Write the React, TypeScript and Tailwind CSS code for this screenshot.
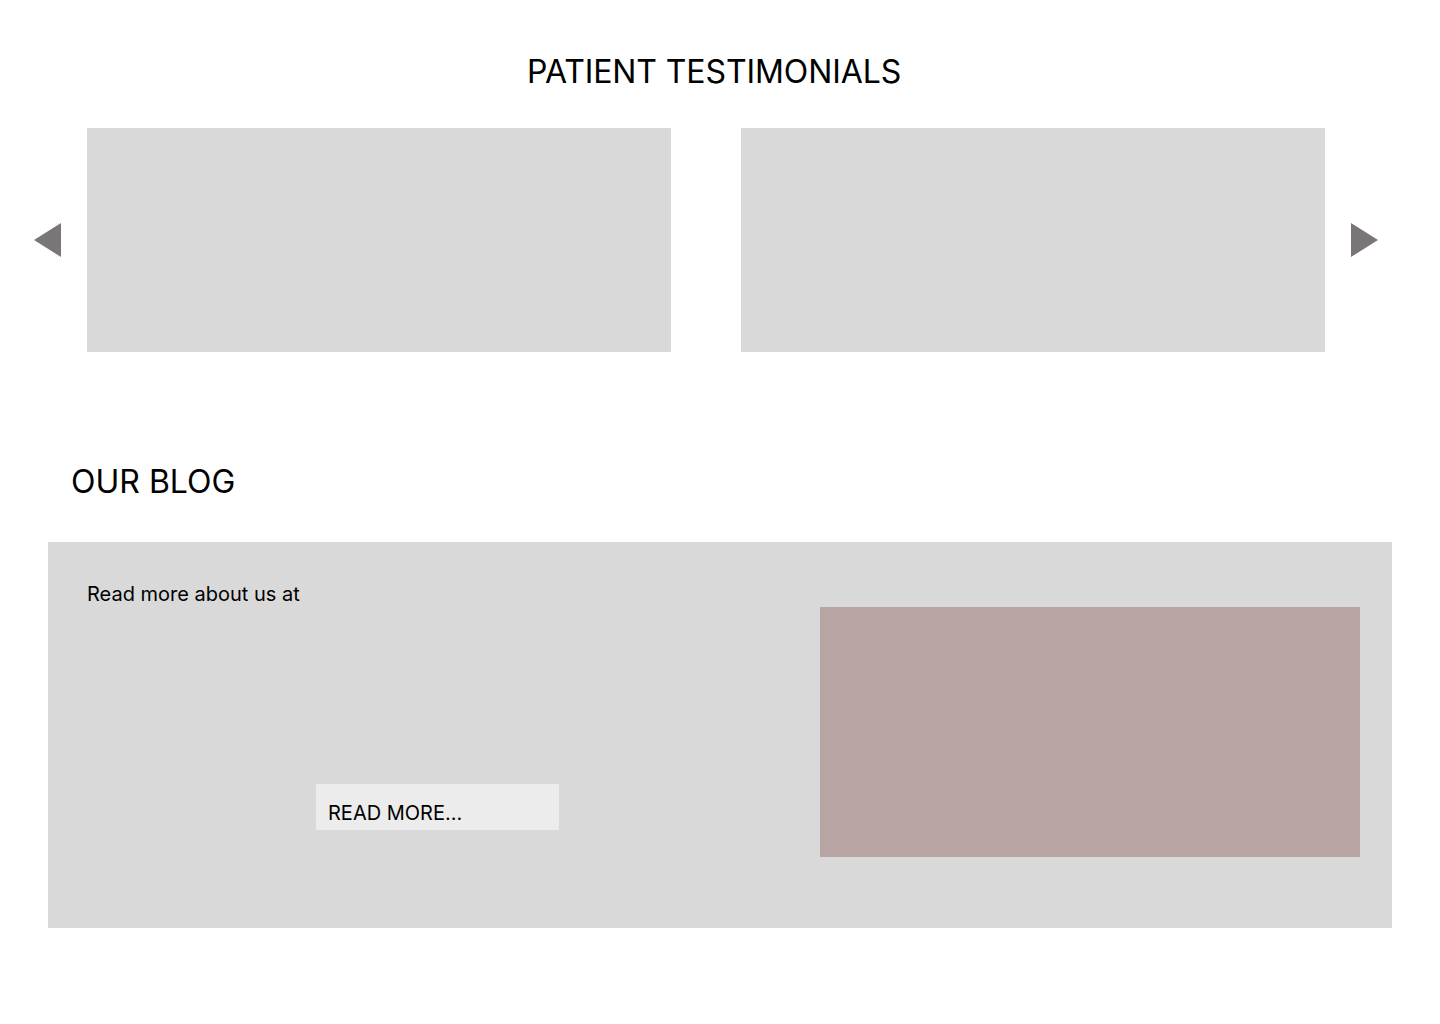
const Arrow = ({ dir }: { dir: 'left' | 'right' }) => (
  <svg width="27" height="34" viewBox="0 0 27 34" className="shrink-0">
    <polygon
      points={dir === 'left' ? '27,0 27,34 0,17' : '0,0 0,34 27,17'}
      fill="#7a7576"
    />
  </svg>
);

export default function App() {
  return (
    <div
      className="w-[1440px] min-h-[1024px] bg-white text-black"
      style={{ fontFamily: 'Inter, "Noto Sans", sans-serif' }}
    >
      {/* Testimonials */}
      <section className="pt-[52px]">
        <h2 className="pr-[12px] text-center text-[32px] leading-[39px] font-normal tracking-[-0.1px]">
          PATIENT TESTIMONIALS
        </h2>
        <div className="mt-[37px] flex items-center pl-[34px]">
          <Arrow dir="left" />
          <div className="ml-[26px] h-[224px] w-[584px] bg-[#d9d9d9]" />
          <div className="ml-[70px] h-[224px] w-[584px] bg-[#d9d9d9]" />
          <div className="ml-[26px]">
            <Arrow dir="right" />
          </div>
        </div>
      </section>

      {/* Blog */}
      <section className="mt-[110px]">
        <h2 className="pl-[71px] text-[32px] leading-[39px] font-normal">OUR BLOG</h2>
        <div className="mx-[48px] mt-[41px] flex h-[386px] bg-[#d9d9d9]">
          <div className="flex flex-col items-start pl-[39px] pt-[40px]">
            <p className="text-[20px] leading-[24px]">Read more about us at</p>
            <button className="ml-[229px] mt-[178px] h-[46px] w-[243px] bg-[#ececec] pl-[12px] pt-[12px] text-left text-[20px] leading-[24px] self-start">
              READ MORE...
            </button>
          </div>
          <div className="ml-auto mr-[32px] mt-[65px] h-[250px] w-[540px] bg-[#b7a4a3]" />
        </div>
      </section>
    </div>
  );
}
